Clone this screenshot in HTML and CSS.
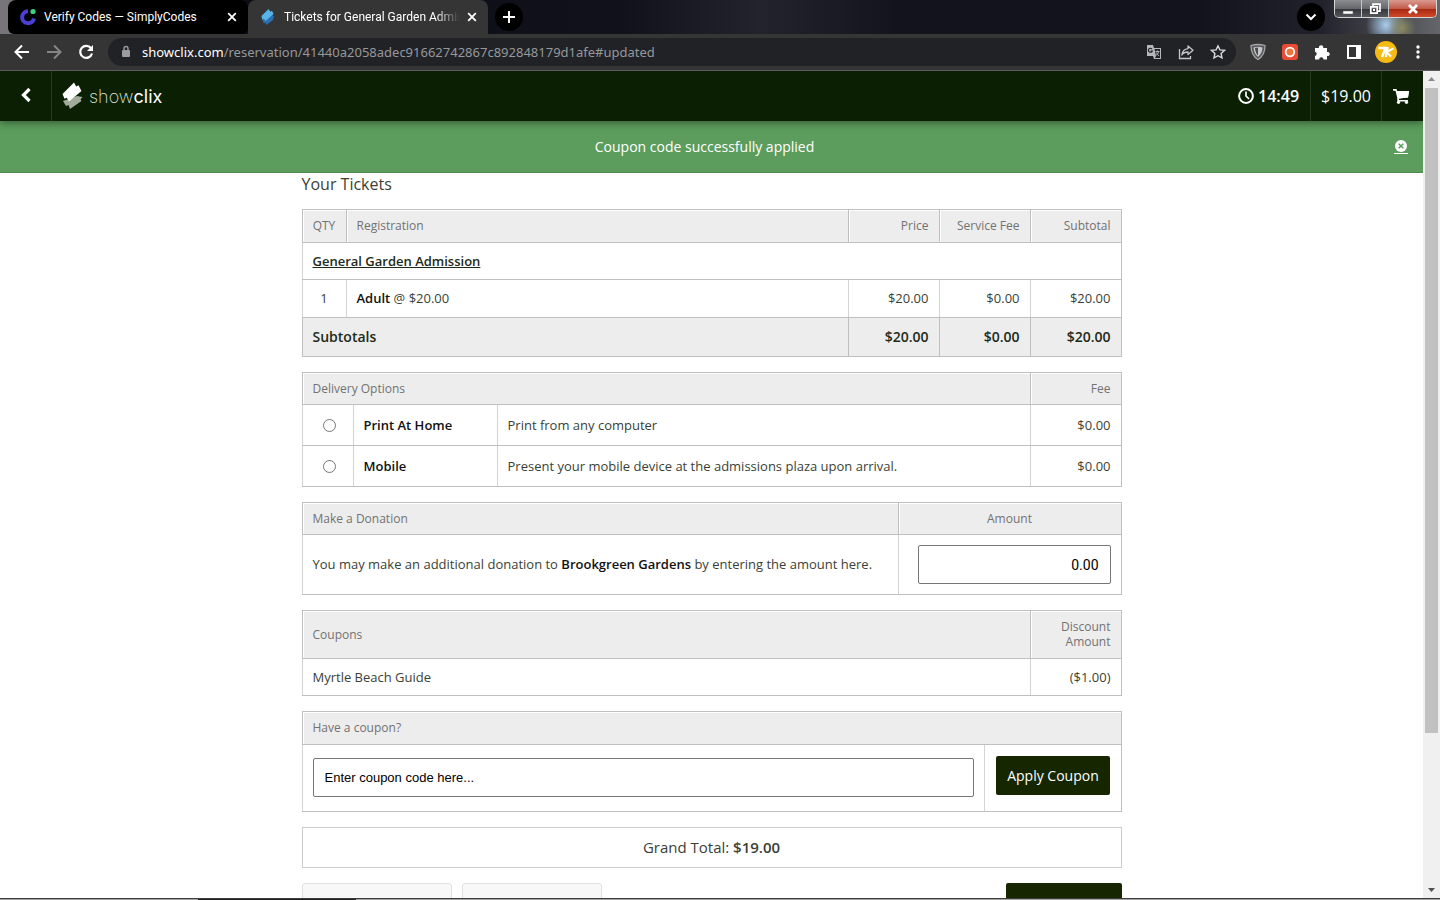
FILE: index.html
```
<!DOCTYPE html>
<html lang="en">
<head>
    <meta charset="UTF-8">
    <meta name="viewport" content="width=device-width, initial-scale=1.0">
    <title>Tickets for General Garden Admission</title>
    <link rel="stylesheet" href="styles.css">
</head>
<body>

<!-- Browser tabs -->
<div class="tab-strip">
    <div class="tab">
        <svg class="tab-icon" width="18" height="18" viewBox="0 0 18 18">
            <path d="M9 3.2A6 6 0 1 0 15 10.500" fill="none" stroke="#4b3fd6" stroke-width="4"/>
            <circle cx="14" cy="3.500" r="2.600" fill="#3fd07a"/>
        </svg>
        <span class="tab-title">Verify Codes — SimplyCodes</span>
        <button class="tab-close" aria-label="Close tab">
            <svg width="10" height="10" viewBox="0 0 10 10"><path d="M1.200 1.200l7.600 7.600M8.800 1.200l-7.600 7.600" stroke="#fff" stroke-width="1.800"/></svg>
        </button>
    </div>
    <div class="tab active">
        <svg class="tab-icon" width="18" height="18" viewBox="0 0 18 18">
            <path d="M3 11l9-5 3.500 3-1.500 1 .5 1.500-7 5.500-1-2.500-1.500 1z" fill="#2c6fae"/>
            <path d="M9.500 1l1.800 2.800 1.700-1 1.500 3.200L6.500 13l-1.700-2.300-1.600.8L2.500 8z" fill="#56b4ea"/>
        </svg>
        <span class="tab-title fade">Tickets for General Garden Admis</span>
        <button class="tab-close" aria-label="Close tab">
            <svg width="10" height="10" viewBox="0 0 10 10"><path d="M1.200 1.200l7.600 7.600M8.800 1.200l-7.600 7.600" stroke="#fff" stroke-width="1.800"/></svg>
        </button>
    </div>
    <button class="round-btn" aria-label="New tab">
        <svg width="12" height="12" viewBox="0 0 12 12"><path d="M6 0v12M0 6h12" stroke="#fff" stroke-width="2"/></svg>
    </button>
    <button class="round-btn search-tabs" aria-label="Search tabs">
        <svg width="12" height="12" viewBox="0 0 12 12"><path d="M1.500 3.500L6 8l4.500-4.500" fill="none" stroke="#fff" stroke-width="2"/></svg>
    </button>
    <div class="window-controls">
        <button aria-label="Minimize">
            <svg width="12" height="12" viewBox="0 0 12 12"><rect x="1" y="8" width="10" height="3" fill="#fff" stroke="#555" stroke-width=".5"/></svg>
        </button>
        <button aria-label="Restore">
            <svg width="12" height="12" viewBox="0 0 12 12"><path d="M4 3V1.200h7v7H9M1.800 3.800h6.400v6.400H1.800z" fill="none" stroke="#fff" stroke-width="1.700"/><rect x="4" y="6" width="2" height="2" fill="#fff"/></svg>
        </button>
        <button class="close-window" aria-label="Close">
            <svg width="12" height="12" viewBox="0 0 12 12"><path d="M2 2l8 8M10 2l-8 8" stroke="#fff" stroke-width="2.800"/></svg>
        </button>
    </div>
</div>

<!-- Address bar -->
<div class="toolbar">
    <button class="nav-btn" aria-label="Back">
        <svg width="16" height="16" viewBox="0 0 16 16"><path d="M15 8H2M8 1.500L1.500 8 8 14.500" fill="none" stroke="#fff" stroke-width="2"/></svg>
    </button>
    <button class="nav-btn" aria-label="Forward">
        <svg width="16" height="16" viewBox="0 0 16 16"><path d="M1 8h13M8 1.500L14.500 8 8 14.500" fill="none" stroke="#858585" stroke-width="2"/></svg>
    </button>
    <button class="nav-btn" aria-label="Reload">
        <svg width="16" height="16" viewBox="0 0 16 16"><path d="M13 4.200A6 6 0 1 0 14 9.500" fill="none" stroke="#fff" stroke-width="2.200"/><path d="M15 1v6H9z" fill="#fff"/></svg>
    </button>
    <div class="address">
        <svg width="12" height="14" viewBox="0 0 12 14"><rect x="2" y="5" width="8" height="7" rx="1" fill="#9a9c9f"/><path d="M4 6V3.500a2 2 0 0 1 4 0V6" fill="none" stroke="#9a9c9f" stroke-width="1.400"/></svg>
        <a class="url" href="#updated"><span class="host">showclix.com</span>/reservation/41440a2058adec91662742867c892848179d1afe#updated</a>
        <div class="address-icons">
            <svg width="16" height="16" viewBox="0 0 16 16"><path d="M1 1h6l1 3h7v11H8l-1-3H1z" fill="#b5b7ba"/><path d="M8.500 5H14v9H9l1-2z" fill="#202226"/><path d="M9.500 7.500h4M11.500 6.500v1M12.500 7.500c0 2-1.500 3.500-3 4.300M10.500 8.500c.5 1.500 1.500 2.800 2.500 3.500" fill="none" stroke="#b5b7ba"/><path d="M6 5A2 2 0 1 0 6.300 7H4.600" fill="none" stroke="#202226" stroke-width="1.200"/></svg>
            <svg width="16" height="16" viewBox="0 0 16 16"><path d="M1.500 5v9.500h11V12" fill="none" stroke="#c4c6c8" stroke-width="1.300"/><path d="M10 2l5 4.200-5 4.300V8C7 8 5 9 3.800 11 4.300 7.500 6.500 5 10 4.600z" fill="none" stroke="#c4c6c8" stroke-width="1.300" stroke-linejoin="round"/></svg>
            <svg width="16" height="16" viewBox="0 0 16 16"><path d="M8 1.800l1.900 4.100 4.500.5-3.300 3 .9 4.500L8 11.700l-4 2.200.9-4.500-3.300-3 4.500-.5z" fill="none" stroke="#d8d9da" stroke-width="1.400"/></svg>
        </div>
    </div>
    <div class="extensions">
        <svg width="16" height="18" viewBox="0 0 16 18"><path d="M1 2.500Q8 .5 15 2.500C15 9 13 13.500 8 16.500 3 13.500 1 9 1 2.500z" fill="#55575a" stroke="#a5a6a8" stroke-width="1.300"/><path d="M3.500 4.500Q8 3 12.500 4.500C12.200 9 11 11.500 8 14 5 11.500 3.800 9 3.500 4.500z" fill="#c5c6c8"/><path d="M8 4.500v8C6 10.500 5.300 8.500 5 5z" fill="#4a4a4a"/></svg>
        <svg width="16" height="16" viewBox="0 0 16 16"><rect width="16" height="16" rx="3" fill="#ea4b35"/><circle cx="8" cy="8" r="4.300" fill="#f0753c" stroke="#fff" stroke-width="1.800"/></svg>
        <svg width="16" height="16" viewBox="0 0 16 16"><path d="M1 4h4a2.200 2.200 0 1 1 4.200 0H13v4a2.100 2.100 0 1 1 0 4v3.500H9.500a2.200 2.200 0 0 0-4.400 0H1V12a2.200 2.200 0 0 0 0-4.300z" fill="#fff"/></svg>
        <svg width="16" height="16" viewBox="0 0 16 16"><path d="M1 1h14v14H1zM3 3v10h7V3z" fill="#fff" fill-rule="evenodd"/></svg>
        <svg width="22" height="22" viewBox="0 0 22 22"><circle cx="11" cy="11" r="11" fill="#f5bb14"/><path d="M3.500 7h7L7 16M12.800 6l-2 10" fill="none" stroke="#fff" stroke-width="2.400"/><path d="M18.500 7.300l-7 3.700 4.500 4.500" fill="none" stroke="#fff" stroke-width="2"/></svg>
        <svg width="16" height="16" viewBox="0 0 16 16"><circle cx="8" cy="3" r="1.700" fill="#fff"/><circle cx="8" cy="8" r="1.700" fill="#fff"/><circle cx="8" cy="13" r="1.700" fill="#fff"/></svg>
    </div>
</div>

<div class="viewport">
    <div class="page">
        <header class="site-header">
            <button class="back" aria-label="Back">
                <svg width="12" height="16" viewBox="0 0 12 16"><path d="M9.500 2L3.500 8l6 6" fill="none" stroke="#fff" stroke-width="3.200"/></svg>
            </button>
            <a class="brand" href="#">
                <svg width="21" height="28" viewBox="0 0 21 28"><path d="M1 19l14-5 5.500 1-2 2.500 1 1.500L8 27l-1.500-4-2.500 1z" fill="#a1aa9b"/><path d="M12 .5L14.200 4.500l2.300-1.200L19.500 9 7 19.500 4.800 15.800l-2.300.9L.5 12z" fill="#fff"/></svg>
                <span class="brand-name">show<b>clix</b></span>
            </a>
            <div class="timer">
                <svg width="16" height="16" viewBox="0 0 16 16"><circle cx="8" cy="8" r="6.900" fill="none" stroke="#fff" stroke-width="2"/><path d="M8 3.500V8l3 3" fill="none" stroke="#fff" stroke-width="1.700"/></svg>
                <span>14:49</span>
            </div>
            <div class="cart-total">$19.00</div>
            <button class="cart" aria-label="Cart">
                <svg width="16" height="16" viewBox="0 0 16 16"><path d="M0 1h3.500l.6 2H16l-1 6.500-9 1V12h9v1.500H4.300V10L2.500 2.700H0z" fill="#fff"/><path d="M4 3h12l-1 6.500-9 1z" fill="#fff"/><circle cx="5.500" cy="14.300" r="1.600" fill="#fff"/><circle cx="13.500" cy="14.300" r="1.600" fill="#fff"/></svg>
            </button>
        </header>

        <div class="notice" role="status">
            <span>Coupon code successfully applied</span>
            <button class="notice-close" aria-label="Dismiss">
                <svg width="12" height="12" viewBox="0 0 12 12"><circle cx="6" cy="6" r="6" fill="#fff"/><path d="M3.700 3.700l4.600 4.600M8.300 3.700L3.700 8.300" stroke="#5c9c5c" stroke-width="1.500"/></svg>
            </button>
        </div>

        <main class="content">
            <h1>Your Tickets</h1>

            <table class="tickets">
                <colgroup><col class="col-qty"><col><col class="col-money"><col class="col-money"><col class="col-money"></colgroup>
                <thead>
                    <tr><th class="center">QTY</th><th>Registration</th><th class="right">Price</th><th class="right">Service Fee</th><th class="right">Subtotal</th></tr>
                </thead>
                <tbody>
                    <tr><td colspan="5"><a class="event-link" href="#">General Garden Admission</a></td></tr>
                    <tr><td class="center">1</td><td><strong>Adult</strong> @ $20.00</td><td class="right">$20.00</td><td class="right">$0.00</td><td class="right">$20.00</td></tr>
                </tbody>
                <tfoot>
                    <tr><td colspan="2">Subtotals</td><td class="right">$20.00</td><td class="right">$0.00</td><td class="right">$20.00</td></tr>
                </tfoot>
            </table>

            <table class="delivery">
                <colgroup><col class="col-radio"><col class="col-method"><col><col class="col-money"></colgroup>
                <thead>
                    <tr><th colspan="3">Delivery Options</th><th class="right">Fee</th></tr>
                </thead>
                <tbody>
                    <tr><td class="pick"><input type="radio" name="delivery" id="print"></td><td><label for="print">Print At Home</label></td><td>Print from any computer</td><td class="right">$0.00</td></tr>
                    <tr><td class="pick"><input type="radio" name="delivery" id="mobile"></td><td><label for="mobile">Mobile</label></td><td>Present your mobile device at the admissions plaza upon arrival.</td><td class="right">$0.00</td></tr>
                </tbody>
            </table>

            <table class="donation">
                <colgroup><col><col class="col-amount"></colgroup>
                <thead>
                    <tr><th>Make a Donation</th><th class="center"><label for="amount">Amount</label></th></tr>
                </thead>
                <tbody>
                    <tr><td>You may make an additional donation to <strong>Brookgreen Gardens</strong> by entering the amount here.</td><td class="amount-cell"><input type="text" id="amount" value="0.00"></td></tr>
                </tbody>
            </table>

            <table class="coupons">
                <colgroup><col><col class="col-money"></colgroup>
                <thead>
                    <tr><th>Coupons</th><th class="right">Discount Amount</th></tr>
                </thead>
                <tbody>
                    <tr><td>Myrtle Beach Guide</td><td class="right">($1.00)</td></tr>
                </tbody>
            </table>

            <table class="coupon-entry">
                <colgroup><col><col class="col-apply"></colgroup>
                <thead>
                    <tr><th colspan="2"><label for="coupon">Have a coupon?</label></th></tr>
                </thead>
                <tbody>
                    <tr><td><input type="text" id="coupon" placeholder="Enter coupon code here..."></td><td class="apply-cell"><button class="primary">Apply Coupon</button></td></tr>
                </tbody>
            </table>

            <div class="grand-total">Grand Total: <strong>$19.00</strong></div>

            <div class="actions">
                <button class="secondary" aria-label="Back to tickets"></button>
                <button class="secondary update" aria-label="Update cart"></button>
                <button class="primary continue" aria-label="Continue"></button>
            </div>
        </main>
    </div>

    <div class="scrollbar">
        <svg width="17" height="17" viewBox="0 0 17 17"><path d="M5 10l3.500-4 3.500 4z" fill="#8b8b8b"/></svg>
        <div class="thumb"></div>
        <svg class="down" width="17" height="17" viewBox="0 0 17 17"><path d="M5 7l3.500 4L12 7z" fill="#505050"/></svg>
    </div>
</div>

<div class="taskbar-edge"></div>

</body>
</html>
```
FILE: styles.css
```
:root {
    --header-bg: #0b1f02;
    --button-bg: #162700;
    --success: #5c9c5c;
    --border: #bfbfbf;
    --border-light: #d4d4d4;
    --head-bg: #ededed;
    --text: #3a3f37;
    --muted: #727272;
    --chrome: #353535;
    --ui-font: "Noto Sans", "Open Sans", sans-serif;
    --page-font: "Open Sans", "Noto Sans", sans-serif;
}

* {
    box-sizing: border-box;
}

body {
    margin: 0;
    height: 100vh;
    display: flex;
    flex-direction: column;
    overflow: hidden;
    font-family: var(--page-font);
    font-size: 13px;
    color: var(--text);
}

button {
    font-family: inherit;
    border: 0;
    padding: 0;
    margin: 0;
    background: none;
    display: flex;
    align-items: center;
    justify-content: center;
}

svg {
    display: block;
    flex: none;
}

/* Tabs */
.tab-strip {
    flex: none;
    height: 34px;
    display: flex;
    align-items: center;
    padding: 0 3px 0 8px;
    background:
        radial-gradient(circle at 1402px 28px, #8a8a60 0, transparent 14px),
        radial-gradient(circle at 1386px 25px, #a9cdec 0, transparent 20px),
        linear-gradient(90deg, #77757a 0, #77757a 8px, #0d0d16 240px, #11111b 620px, #22232c 760px, #12131c 900px, #12131d 1200px, #20212a 1320px, #65666b 1440px);
    font-family: Roboto, sans-serif;
    font-size: 12px;
    color: #fff;
}

.tab {
    width: 240px;
    height: 34px;
    display: flex;
    align-items: center;
    gap: 7px;
    padding: 0 11px;
    background: #000;
    border-radius: 8px 8px 6px 6px;
}

.tab.active {
    background: var(--chrome);
    border-radius: 8px 8px 0 0;
}

.tab-title {
    flex: 1;
    min-width: 0;
    white-space: nowrap;
}

.fade {
    mask-image: linear-gradient(90deg, #000 86%, transparent);
}

.round-btn {
    width: 28px;
    height: 28px;
    margin-left: 7px;
    border-radius: 50%;
    background: #000;
}

.search-tabs {
    margin-left: auto;
}

.window-controls {
    align-self: flex-start;
    display: flex;
    height: 18px;
    margin-left: 9px;
    border: 1px solid #d5d5d5;
    border-top: 0;
    border-radius: 0 0 5px 5px;
    overflow: hidden;
}

.window-controls button {
    width: 27px;
    background: linear-gradient(#8b8c90 0, #66676c 50%, #34353b 51%, #55565c);
    border-right: 1px solid #c5c5c5;
}

.window-controls .close-window {
    width: 47px;
    border-right: 0;
    background: linear-gradient(#d99a90 0, #c25b4a 50%, #a62610 51%, #cf4a2c);
}

/* Toolbar */
.toolbar {
    flex: none;
    height: 37px;
    display: flex;
    align-items: center;
    padding: 0 14px;
    background: var(--chrome);
    border-bottom: 1px solid #5a5a5a;
}

.nav-btn {
    width: 16px;
    height: 28px;
    margin-right: 16px;
}

.address {
    flex: 1;
    height: 28px;
    display: flex;
    align-items: center;
    margin-left: -2px;
    padding: 0 10px 0 12px;
    border-radius: 14px;
    background: #202226;
}

.url {
    margin-left: 10px;
    font-family: var(--ui-font);
    font-size: 13px;
    color: #96989b;
    text-decoration: none;
    white-space: nowrap;
}

.host {
    color: #fff;
}

.address-icons {
    display: flex;
    gap: 16px;
    margin-left: auto;
}

.extensions {
    display: flex;
    align-items: center;
    gap: 16px;
    margin-left: 14px;
}

.extensions svg:nth-child(5) {
    margin: 0 -3px;
}

/* Page area */
.viewport {
    flex: 1;
    min-height: 0;
    display: flex;
}

.page {
    flex: 1;
    min-width: 0;
    overflow: hidden;
    background: #fff;
}

.site-header {
    position: relative;
    height: 50px;
    display: flex;
    align-items: stretch;
    background: var(--header-bg);
    box-shadow: 0 1px 8px rgba(0, 0, 0, 0.5);
    color: #fff;
    font-size: 16px;
}

.back {
    width: 52px;
    padding-bottom: 2px;
    border-right: 1px solid #273b1f;
}

.brand {
    display: flex;
    align-items: center;
    gap: 6px;
    padding-left: 10px;
    margin-right: auto;
    color: #dde3da;
    text-decoration: none;
}

.brand-name {
    font-family: Inter, sans-serif;
    font-size: 18px;
    font-weight: 200;
}

.brand-name b {
    font-weight: 400;
    color: #fff;
}

.timer {
    display: flex;
    align-items: center;
    gap: 4px;
    padding-right: 11px;
    font-weight: 600;
}

.cart-total {
    display: flex;
    align-items: center;
    padding: 0 10px;
    border: 1px solid #273b1f;
    border-width: 0 1px;
}

.cart {
    width: 41px;
    padding-right: 4px;
}

.notice {
    height: 52px;
    display: flex;
    align-items: center;
    padding: 0 15px;
    background: var(--success);
    border-bottom: 1px solid #4d8a4d;
    color: #fff;
    font-size: 14px;
    font-weight: 500;
}

.notice span {
    flex: 1;
    text-align: center;
}

.notice-close {
    padding: 0 1px 1px;
    border-bottom: 1px solid #fff;
}

.content {
    max-width: 820px;
    margin: 0 auto;
}

h1 {
    margin: 0 0 14px;
    font-size: 16px;
    line-height: 22px;
    font-weight: 400;
}

table {
    width: 100%;
    margin-bottom: 15px;
    border-collapse: collapse;
    table-layout: fixed;
    border: 1px solid var(--border);
}

th,
td {
    padding: 0 10px 1px;
    text-align: left;
    font-weight: 400;
    border-left: 1px solid var(--border-light);
    border-bottom: 1px solid var(--border);
}

th {
    height: 32px;
    background: var(--head-bg);
    border-left-color: var(--border);
    box-shadow: inset 1px 1px #fff;
    color: var(--muted);
    font-size: 12px;
    line-height: 15px;
}

strong,
label {
    font-weight: 600;
}

td strong,
td label {
    color: #111;
}

th label {
    font-weight: 400;
}

.center {
    text-align: center;
}

.right {
    text-align: right;
}

.col-qty {
    width: 44px;
}

.col-money {
    width: 91px;
}

.col-radio {
    width: 51px;
}

.col-method {
    width: 144px;
}

.col-amount {
    width: 223px;
}

.col-apply {
    width: 136px;
}

.tickets th,
.coupon-entry th {
    height: 33px;
}

.tickets td,
.coupons td {
    height: 37px;
}

.tickets tbody tr:last-child td {
    height: 38px;
}

.tickets tfoot td {
    height: 39px;
    background: var(--head-bg);
    border-left-color: var(--border);
    color: #1e2a18;
    font-size: 14px;
    font-weight: 600;
}

.event-link {
    color: #1e2a18;
    font-weight: 600;
}

.delivery td {
    height: 41px;
}

.delivery .pick {
    padding: 0 10px 2px 13px;
    text-align: center;
}

.pick input {
    margin: 0;
    vertical-align: middle;
}

.donation td {
    height: 60px;
}

.donation .amount-cell {
    padding: 0 10px 0 19px;
}

input[type="text"] {
    display: block;
    width: 100%;
    height: 39px;
    padding: 0 11px;
    border: 1px solid #767676;
    border-radius: 2px;
    background: #fff;
    color: #000;
    font-family: "Liberation Sans", Arial, sans-serif;
    font-size: 13px;
}

input::placeholder {
    color: #000;
}

#amount {
    text-align: right;
    font-family: Roboto, sans-serif;
    font-size: 14px;
}

.coupons th {
    height: 48px;
}

.coupon-entry td {
    height: 67px;
}

.primary {
    height: 39px;
    border-radius: 2px;
    background: var(--button-bg);
    color: #fff;
    font-size: 14px;
    font-weight: 500;
}

.coupon-entry .apply-cell {
    padding: 0 11px 5px;
}

.apply-cell .primary {
    width: 100%;
    white-space: nowrap;
}

.grand-total {
    height: 41px;
    margin-bottom: 15px;
    border: 1px solid #ccc;
    font-size: 15px;
    line-height: 39px;
    text-align: center;
}

.actions {
    display: flex;
    gap: 10px;
}

.secondary {
    width: 150px;
    height: 39px;
    border: 1px solid #e2e2e2;
    border-radius: 3px;
    background: #f8f8f8;
}

.update {
    width: 140px;
}

.continue {
    width: 116px;
    margin-left: auto;
}

/* Scrollbar */
.scrollbar {
    flex: none;
    width: 17px;
    display: flex;
    flex-direction: column;
    background: #f0f0f0;
}

.thumb {
    flex: none;
    width: 13px;
    height: 78%;
    margin: 0 auto;
    background: #c1c1c1;
}

.down {
    margin-top: auto;
}

.taskbar-edge {
    flex: none;
    height: 2px;
    border-top: 1px solid #3c3c3c;
    background: linear-gradient(90deg, #a5a5a5 198px, #222 198px, #222 356px, #a5a5a5 356px);
}
```
